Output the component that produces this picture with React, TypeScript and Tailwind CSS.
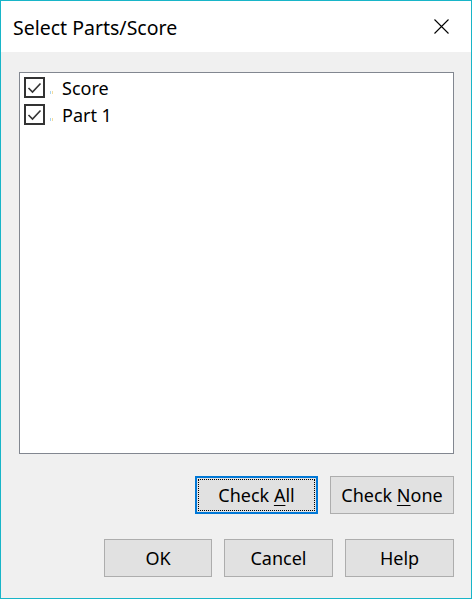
import { useState } from 'react'

const FONT = { fontFamily: '"Noto Sans", "Open Sans", sans-serif' }

function CheckBox({ checked, onToggle }: { checked: boolean; onToggle: () => void }) {
  return (
    <button
      onClick={onToggle}
      className="w-[21px] h-[21px] border-2 border-[#333333] bg-white flex items-center justify-center shrink-0"
    >
      {checked && (
        <svg width="15" height="15" viewBox="0 0 15 15" fill="none">
          <path d="M1.5 8 L5.5 12 L13.5 3.5" stroke="#333333" strokeWidth="1.6" />
        </svg>
      )}
    </button>
  )
}

function Btn({ label, mnemonic, width, focused }: { label: string; mnemonic?: number; width: string; focused?: boolean }) {
  const text =
    mnemonic === undefined ? (
      <span>{label}</span>
    ) : (
      <span className="whitespace-pre">
        {label.slice(0, mnemonic)}
        <span className="underline underline-offset-[3px]">{label[mnemonic]}</span>
        {label.slice(mnemonic + 1)}
      </span>
    )
  return (
    <button
      className={`${width} h-[38px] bg-[#e1e1e1] text-[18px] text-black flex items-center justify-center ${
        focused ? 'border-2 border-[#0078d7] p-px' : 'border border-[#adadad]'
      }`}
    >
      {focused ? (
        <span className="w-full h-full border border-dotted border-black flex items-center justify-center">{text}</span>
      ) : (
        text
      )}
    </button>
  )
}

export default function App() {
  const [items, setItems] = useState([
    { name: 'Score', checked: true },
    { name: 'Part 1', checked: true },
  ])

  const toggle = (i: number) =>
    setItems(items.map((it, j) => (j === i ? { ...it, checked: !it.checked } : it)))

  return (
    <div style={FONT} className="w-[472px] h-[599px] border border-[#18b5c8] flex flex-col bg-[#f0f0f0] text-black">
      {/* title bar */}
      <div className="h-[51px] bg-white flex items-center justify-between pl-[12px] pr-[22px] shrink-0">
        <span className="text-[19.5px] leading-none pt-[2px]">Select Parts/Score</span>
        <svg width="15" height="15" viewBox="0 0 15 15">
          <path d="M0.5 0.5 L14.5 14.5 M14.5 0.5 L0.5 14.5" stroke="#000" strokeWidth="1.1" />
        </svg>
      </div>

      <div className="flex-1 flex flex-col pl-[18px] pr-[17px] pt-[20px]">
        {/* list */}
        <div className="h-[382px] border border-[#828790] bg-white pt-[1px] pl-[4px]">
          {items.map((it, i) => (
            <div key={it.name} className="h-[27px] flex items-center">
              <CheckBox checked={it.checked} onToggle={() => toggle(i)} />
              <span className="relative w-[17px] h-full">
                <span className="absolute left-[5px] top-[17px] w-px h-[3px] bg-[#a8d4f0]" />
                <span className="absolute left-[7px] top-[17px] w-px h-[3px] bg-[#f3dc9c]" />
              </span>
              <span className="text-[18px] leading-none">{it.name}</span>
            </div>
          ))}
        </div>

        <div className="flex justify-end gap-[12px] mt-[22px]">
          <Btn label="Check All" mnemonic={6} width="w-[123px]" focused />
          <Btn label="Check None" mnemonic={6} width="w-[124px]" />
        </div>

        <div className="flex justify-end gap-[12px] mt-[25px]">
          <Btn label="OK" width="w-[108px]" />
          <Btn label="Cancel" width="w-[109px]" />
          <Btn label="Help" width="w-[109px]" />
        </div>
      </div>
    </div>
  )
}
